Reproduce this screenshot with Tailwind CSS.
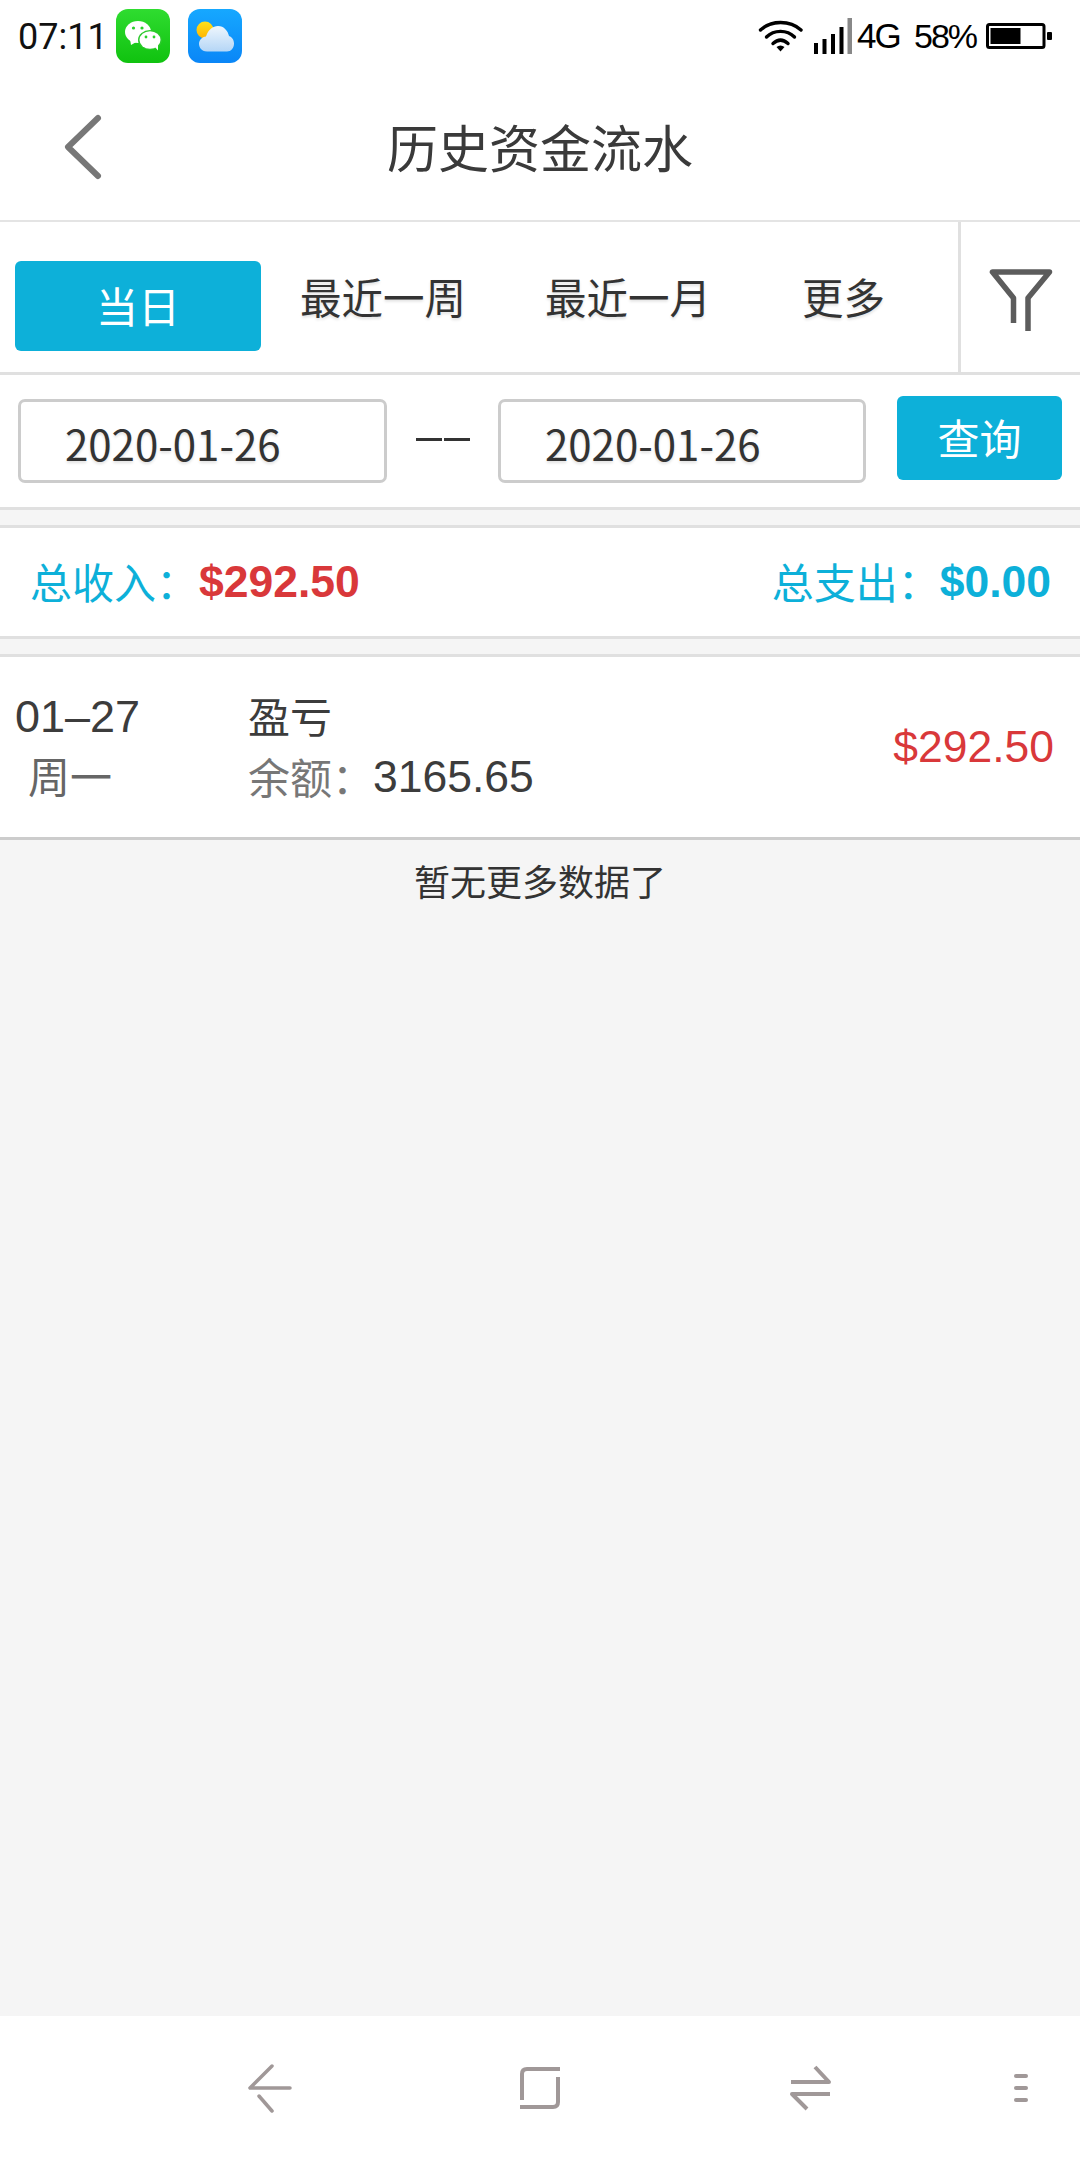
<!doctype html>
<html lang="zh-CN">
<head>
<meta charset="utf-8">
<script src="https://cdn.jsdelivr.net/npm/@tailwindcss/browser@4"></script>
</head>
<body class="m-0 bg-[#f5f5f5]">
<div class="w-[1080px] h-[2160px] flex flex-col bg-[#f5f5f5] text-[#333] [font-family:'Noto_Sans_CJK_SC',sans-serif] overflow-hidden">

  <!-- status bar -->
  <div class="h-[72px] bg-white flex items-start relative">
    <span class="ml-[18px] w-[98px] shrink-0 mt-[16px] text-[36px] leading-[42px] text-[#111] [font-family:Roboto,sans-serif]">07:11</span>
    <svg class="mt-[9px]" width="54" height="54" viewBox="0 0 54 54">
      <defs><linearGradient id="wg" x1="0" y1="0" x2="0" y2="1"><stop offset="0" stop-color="#2fdc30"/><stop offset="1" stop-color="#10c20f"/></linearGradient></defs>
      <rect width="54" height="54" rx="12" fill="url(#wg)"/>
      <ellipse cx="22" cy="23" rx="13" ry="11" fill="#fff"/>
      <path d="M14 30 L15 36 L22 32 Z" fill="#fff"/>
      <ellipse cx="34" cy="31" rx="12" ry="10" fill="#2bc92b"/>
      <ellipse cx="34" cy="31" rx="10.5" ry="8.8" fill="#fff"/>
      <path d="M38 37 L42 41.5 L42 35 Z" fill="#fff"/>
      <circle cx="17.500" cy="19" r="1.6" fill="#2bd02b"/><circle cx="26" cy="19" r="1.6" fill="#2bd02b"/>
      <circle cx="30" cy="28" r="1.4" fill="#2bd02b"/><circle cx="38" cy="28" r="1.4" fill="#2bd02b"/>
    </svg>
    <svg class="ml-[18px] mt-[9px]" width="54" height="54" viewBox="0 0 54 54">
      <defs>
        <linearGradient id="bg2" x1="0" y1="0" x2="0" y2="1"><stop offset="0" stop-color="#16a8ff"/><stop offset="1" stop-color="#0a86f7"/></linearGradient>
        <linearGradient id="cl" x1="0" y1="0" x2="0" y2="1"><stop offset="0" stop-color="#eef6fd"/><stop offset="1" stop-color="#b5d6f6"/></linearGradient>
        <linearGradient id="su" x1="0" y1="0" x2="0" y2="1"><stop offset="0" stop-color="#ffe11a"/><stop offset="1" stop-color="#ffb400"/></linearGradient>
      </defs>
      <rect width="54" height="54" rx="12" fill="url(#bg2)"/>
      <circle cx="17" cy="21" r="8.5" fill="url(#su)"/>
      <path d="M19 42.5 C13 42.500 11 37.500 11 35 C11 31 14 28 18 27.500 C20 21 25 17 30 17 C36 17 40 22 41 27 C44 28 46 31 46 34.500 C46 39 43 42.500 39 42.500 Z" fill="url(#cl)"/>
    </svg>
    <div class="ml-auto flex items-start">
      <svg class="mt-[18px]" width="46" height="36" viewBox="0 0 46 36" fill="none" stroke="#000" stroke-width="3.4" stroke-linecap="round">
        <path d="M2.500 12 C13 2 32 2 43 12"/>
        <path d="M8.500 19 C16 11.500 29 11.500 36.500 19"/>
        <path d="M15 25.500 C20 21 25 21 30 25.500"/>
        <path d="M18.500 29 L22.500 33.500 L26.500 29 C24 27 21 27 18.500 29 Z" fill="#000" stroke="none"/>
      </svg>
      <svg class="ml-[10px] mt-[18px]" width="39" height="36" viewBox="0 0 39 36">
        <rect x="0" y="25" width="4" height="11" fill="#000"/>
        <rect x="8.500" y="21" width="4" height="15" fill="#000"/>
        <rect x="17" y="16" width="4" height="20" fill="#000"/>
        <rect x="25.500" y="9" width="4" height="27" fill="#000"/>
        <rect x="33.500" y="0" width="4.500" height="36" fill="#888"/>
      </svg>
      <span class="ml-[4px] w-[45px] mt-[14px] text-[35px] leading-[44px] text-black [font-family:'Liberation_Sans',sans-serif] tracking-[-2px]">4G</span>
      <span class="ml-[12px] w-[63px] mt-[14px] text-[34px] leading-[44px] text-black [font-family:'Liberation_Sans',sans-serif] tracking-[-2px]">58%</span>
      <svg class="ml-[9px] mr-[28px] mt-[23px]" width="66" height="26" viewBox="0 0 66 26">
        <rect x="1.500" y="1.500" width="56.500" height="23" rx="2" fill="none" stroke="#000" stroke-width="3"/>
        <rect x="4.500" y="5" width="30" height="16" fill="#000"/>
        <rect x="61" y="9" width="5" height="8" rx="1" fill="#000"/>
      </svg>
    </div>
  </div>

  <!-- title bar -->
  <div class="h-[150px] bg-white border-b-2 border-[#e4e4e4] flex items-center relative">
    <svg class="ml-[62px] mt-[2px]" width="44" height="70" viewBox="0 0 44 70" fill="none" stroke="#777" stroke-width="6" stroke-linecap="round" stroke-linejoin="round">
      <path d="M36 6 L6 35 L36 64"/>
    </svg>
    <span class="absolute left-0 right-0 text-center text-[51px] leading-[72px] text-[#3a3a3a]">历史资金流水</span>
  </div>

  <!-- tabs -->
  <div class="h-[153px] bg-white border-b-[3px] border-[#e0e0e0] flex items-start [text-shadow:0_2px_3px_rgba(0,0,0,0.12)]">
    <div class="ml-[15px] mt-[39px] w-[246px] h-[90px] shrink-0 rounded-[6px] bg-[#0db0d9] text-white text-[42px] pb-[3px] flex items-center justify-center [text-shadow:none]">当日</div>
    <span class="ml-[39px] mt-[46px] text-[41.500px] leading-[56px] w-[168px] shrink-0">最近一周</span>
    <span class="ml-[77px] mt-[46px] text-[41.500px] leading-[56px] w-[168px] shrink-0">最近一月</span>
    <span class="ml-[89px] mt-[46px] text-[41.500px] leading-[56px] w-[84px] shrink-0">更多</span>
    <div class="ml-[72px] w-[3px] h-full bg-[#e0e0e0] shrink-0"></div>
    <svg class="ml-[25px] mt-[43px] shrink-0" width="70" height="72" viewBox="0 0 70 72" fill="none" stroke="#5c5c5c" stroke-width="5.500" stroke-linejoin="round">
      <path d="M27.500 58 V33 L6.500 7 H63.500 L42 33 V66"/>
    </svg>
  </div>

  <!-- date range -->
  <div class="h-[135px] bg-white border-b-[3px] border-[#e0e0e0] flex items-start">
    <div class="ml-[18px] mt-[24px] w-[369px] h-[84px] box-border border-[3px] border-[#ccc] rounded-[7px] pl-[44px] text-[42px] leading-[82px] [text-shadow:0_2px_3px_rgba(0,0,0,0.12)]">2020-01-26</div>
    <div class="ml-[29px] mt-[63px] flex gap-[2px]"><div class="w-[26px] h-[3px] bg-[#333]"></div><div class="w-[26px] h-[3px] bg-[#333]"></div></div>
    <div class="ml-[28px] mt-[24px] w-[368px] h-[84px] box-border border-[3px] border-[#ccc] rounded-[7px] pl-[44px] text-[42px] leading-[82px] [text-shadow:0_2px_3px_rgba(0,0,0,0.12)]">2020-01-26</div>
    <div class="ml-[31px] mt-[21px] w-[165px] h-[84px] rounded-[6px] bg-[#0db0d9] text-white text-[42px] pb-[3px] flex items-center justify-center">查询</div>
  </div>

  <div class="h-[15px]"></div>

  <!-- totals -->
  <div class="h-[114px] bg-white border-y-[3px] border-[#e0e0e0] flex items-center justify-between pl-[30px] pr-[29px] text-[#0db0d9] text-[42px]">
    <div class="flex items-center"><span class="mb-[3px]">总收入：</span><b class="ml-[1px] text-[44.500px] text-[#d9383a] [font-family:'Liberation_Sans',sans-serif]">$292.50</b></div>
    <div class="flex items-center"><span class="mb-[3px]">总支出：</span><b class="text-[44.500px] [font-family:'Liberation_Sans',sans-serif]">$0.00</b></div>
  </div>

  <div class="h-[15px]"></div>

  <!-- record -->
  <div class="h-[186px] bg-white border-t-[3px] border-b-[3px] border-t-[#e0e0e0] border-b-[#ccc] flex items-center text-[#3c3c3c]">
    <div class="w-[248px] shrink-0 pl-[15px]">
      <div class="h-[60px] leading-[60px] text-[45px] [font-family:'Liberation_Sans',sans-serif]">01–27</div>
      <div class="h-[60px] leading-[56px] text-[42px] pl-[13px] text-[#666]">周一</div>
    </div>
    <div>
      <div class="h-[60px] leading-[56px] text-[42px]">盈亏</div>
      <div class="h-[60px] text-[42px] text-[#777] flex items-center"><span class="mb-[4px]">余额：</span><span class="-ml-[1px] text-[#3c3c3c] text-[44.500px] [font-family:'Liberation_Sans',sans-serif]">3165.65</span></div>
    </div>
    <div class="ml-auto pr-[26px] text-[44.500px] text-[#d9383a] [font-family:'Liberation_Sans',sans-serif]">$292.50</div>
  </div>

  <!-- empty note -->
  <div class="flex-1 pt-[15px] text-center text-[36px] leading-[50px]">暂无更多数据了</div>

  <!-- system nav -->
  <div class="h-[144px] bg-white flex items-center shrink-0">
    <svg class="ml-[248px]" width="44" height="50" viewBox="0 0 44 50" fill="none" stroke="#a09898" stroke-width="3.500" stroke-linecap="round" stroke-linejoin="round">
      <path d="M24 3 L2 25 H42"/><path d="M11 33 L24 48"/>
    </svg>
    <svg class="ml-[227px]" width="44" height="50" viewBox="0 0 44 50" fill="none" stroke="#a09898" stroke-width="4">
      <path d="M41 6 H8 Q3 6 3 11 V37"/><path d="M39 14 V39 Q39 44 34 44 H1"/>
    </svg>
    <svg class="ml-[226px]" width="44" height="50" viewBox="0 0 44 50" fill="none" stroke="#a09898" stroke-width="4" stroke-linejoin="round">
      <path d="M2 19 H40 L26 4"/><path d="M41 31 H3 L18 46"/>
    </svg>
    <div class="ml-[181px] flex flex-col gap-[8px]">
      <div class="w-[14px] h-[4px] rounded-full bg-[#a09898]"></div>
      <div class="w-[14px] h-[4px] rounded-full bg-[#a09898]"></div>
      <div class="w-[14px] h-[4px] rounded-full bg-[#a09898]"></div>
    </div>
  </div>
</div>
</body>
</html>
